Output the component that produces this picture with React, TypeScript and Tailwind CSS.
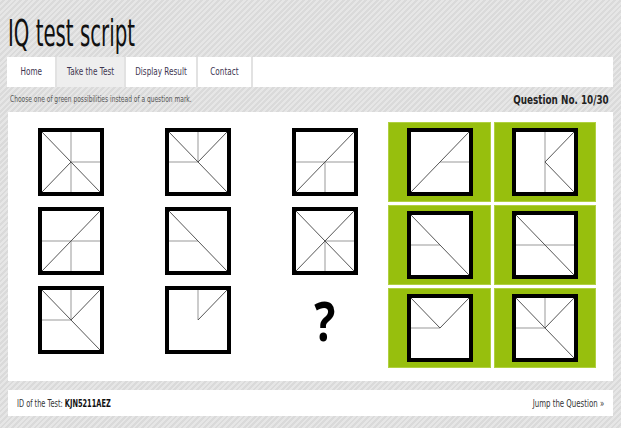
import React from "react";

type Seg = [number, number, number, number, boolean];

const TLBR: Seg = [0, 0, 100, 100, true];
const BLTR: Seg = [0, 100, 100, 0, true];
const CBL: Seg = [50, 50, 0, 100, true];
const CTR: Seg = [50, 50, 100, 0, true];
const CBR: Seg = [50, 50, 100, 100, true];
const TLC: Seg = [0, 0, 50, 50, true];
const TRBL: Seg = [100, 0, 0, 100, true];
const VFULL: Seg = [50, 0, 50, 100, false];
const VTOP: Seg = [50, 0, 50, 50, false];
const VBOT: Seg = [50, 50, 50, 100, false];
const HFULL: Seg = [0, 50, 100, 50, false];
const HLEFT: Seg = [0, 50, 50, 50, false];
const HRIGHT: Seg = [50, 50, 100, 50, false];

const figA: Seg[] = [VFULL, HRIGHT, TLBR, CBL];
const figB: Seg[] = [VTOP, HLEFT, TLBR, CTR];
const figC: Seg[] = [HFULL, VBOT, BLTR];
const figE: Seg[] = [HLEFT, TLBR];
const figF: Seg[] = [VBOT, HRIGHT, TLBR, TRBL];
const figH: Seg[] = [VTOP, CTR];

const opts: Seg[][] = [
  [HRIGHT, BLTR],
  [VFULL, CTR, CBR],
  [HLEFT, TLBR],
  [HFULL, TLBR],
  [HLEFT, TLC, CTR],
  figB,
];

function Figure({ segs }: { segs: Seg[] }) {
  return (
    <div className="w-[66px] h-[68px] border-4 border-black bg-white shrink-0">
      <svg viewBox="0 0 100 100" preserveAspectRatio="none" className="w-full h-full block">
        {segs.map((s, i) => (
          <line
            key={i}
            x1={s[0]}
            y1={s[1]}
            x2={s[2]}
            y2={s[3]}
            stroke={s[4] ? "#555" : "#999"}
            strokeWidth={1}
            vectorEffect="non-scaling-stroke"
          />
        ))}
      </svg>
    </div>
  );
}

const cond = "[font-family:'DejaVu_Sans',sans-serif]";

function NavItem({ label, w, active }: { label: string; w: string; active?: boolean }) {
  return (
    <div className={`${w} flex items-center justify-center border-r-2 border-[#e2e2e2] ${active ? "bg-[#eeeeee]" : ""}`}>
      <span className="inline-block whitespace-nowrap scale-x-[0.66] origin-center">{label}</span>
    </div>
  );
}

export default function App() {
  const left: (Seg[] | null)[] = [figA, figB, figC, figC, figE, figF, figB, figH, null];
  return (
    <div className="w-[621px] h-[428px] overflow-hidden px-2 bg-[repeating-linear-gradient(135deg,#e6e6e6_0px,#e6e6e6_2px,#dadada_2px,#dadada_4px)]">
      <div className="h-[57px] flex items-end pb-[5px]">
        <h1 className={`${cond} text-[38px] leading-none font-normal text-[#111] origin-left scale-x-[0.52] inline-block whitespace-nowrap`}>
          IQ test script
        </h1>
      </div>
      <nav className={`${cond} h-[30px] bg-white flex text-[11px] text-[#3d3550] ml-[-1px]`}>
        <NavItem label="Home" w="w-[50px]" />
        <NavItem label="Take the Test" w="w-[69px]" active />
        <NavItem label="Display Result" w="w-[72px]" />
        <NavItem label="Contact" w="w-[55px]" />
      </nav>
      <div className={`${cond} h-[25px] flex items-center justify-between px-[2px]`}>
        <span className="inline-block whitespace-nowrap origin-left scale-x-[0.66] text-[9px] text-[#555]">
          Choose one of green possibilities instead of a question mark.
        </span>
        <span className="inline-block whitespace-nowrap origin-right scale-x-[0.68] text-[13px] font-bold text-[#222] pr-[4px]">
          Question No. 10/30
        </span>
      </div>
      <div className="h-[269px] bg-white flex pl-[30px] pr-[16px]">
        <div className="grid grid-cols-[repeat(3,66px)] gap-x-[61px] gap-y-[11px] pt-[16px] content-start">
          {left.map((f, i) =>
            f ? (
              <Figure key={i} segs={f} />
            ) : (
              <div key={i} className="w-[66px] h-[68px] flex items-center justify-center">
                <span className="inline-block [font-family:'Open_Sans',sans-serif] font-bold text-[54px] leading-none text-black scale-x-[0.82]">?</span>
              </div>
            )
          )}
        </div>
        <div className="ml-[30px] mt-[10px] grid grid-cols-[103px_102px] grid-rows-[repeat(3,80px)] gap-[3px] self-start">
          {opts.map((f, i) => (
            <div key={i} className="bg-[#97bf0d] border border-[#b0d040] flex items-center justify-center">
              <Figure segs={f} />
            </div>
          ))}
        </div>
      </div>
      <div className={`${cond} mt-[9px] h-[26px] bg-white flex items-center justify-between px-[9px] text-[10px] text-[#333]`}>
        <span className="inline-block whitespace-nowrap origin-left scale-x-[0.66]">
          ID of the Test: <span className="font-bold text-[#111]">KJN5211AEZ</span>
        </span>
        <span className="inline-block whitespace-nowrap origin-right scale-x-[0.7]">Jump the Question »</span>
      </div>
    </div>
  );
}
